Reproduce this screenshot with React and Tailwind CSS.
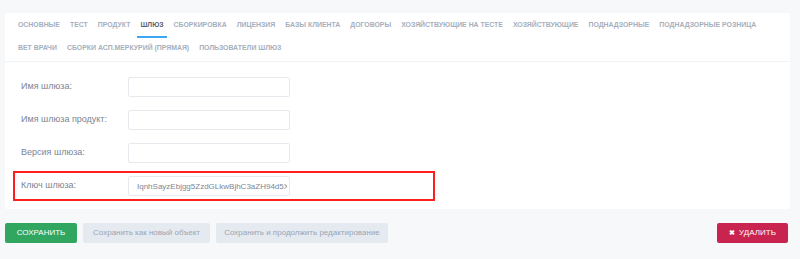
import React from "react";

const row1 = [
  "ОСНОВНЫЕ",
  "ТЕСТ",
  "ПРОДУКТ",
  "ШЛЮЗ",
  "СБОРКИРОВКА",
  "ЛИЦЕНЗИЯ",
  "БАЗЫ КЛИЕНТА",
  "ДОГОВОРЫ",
  "ХОЗЯЙСТВУЮЩИЕ НА ТЕСТЕ",
  "ХОЗЯЙСТВУЮЩИЕ",
  "ПОДНАДЗОРНЫЕ",
  "ПОДНАДЗОРНЫЕ РОЗНИЦА",
];
const row2 = ["ВЕТ ВРАЧИ", "СБОРКИ АСП.МЕРКУРИЙ (ПРЯМАЯ)", "ПОЛЬЗОВАТЕЛИ ШЛЮЗ"];

function Tab({ label }) {
  const active = label === "ШЛЮЗ";
  return (
    <div
      className={
        "px-[3px] pb-[5px] h-[19px] text-[6.9px] leading-[12px] font-bold whitespace-nowrap border-b-2 " +
        (active ? "border-[#3aa8f2] text-[#5b6372]" : "border-transparent text-[#a7afbc]")
      }
    >
      {label}
    </div>
  );
}

function Row({ label, value, highlight }) {
  return (
    <div
      className={
        "w-[422px] h-[30px] border-2 pl-[6px] py-[3px] flex items-center " +
        (highlight ? "border-[#ff1f1f]" : "border-transparent")
      }
    >
      <div className="w-[107px] text-[9px] text-[#7c8492]">{label}</div>
      <input
        readOnly
        value={value || ""}
        className="w-[162px] h-[20px] bg-white border border-[#e6e9ee] rounded-[2px] pl-[8px] pr-[2px] text-[8px] text-[#7d8696] outline-none"
        style={{ fontFamily: '"Liberation Sans", Arial, sans-serif' }}
      />
    </div>
  );
}

export default function App() {
  return (
    <div
      className="w-[800px] h-[259px] bg-[#f7f8fa] pt-[13px] pl-[5px] overflow-hidden"
      style={{ fontFamily: '"Liberation Sans", Arial, sans-serif' }}
    >
      <div className="w-[785px] bg-white rounded-[2px]">
        <div className="pl-[10px] pt-[6px] border-b border-[#f1f3f6] flex flex-col gap-[4px]">
          <div className="flex gap-x-[4px]">
            {row1.map((t) => (
              <Tab key={t} label={t} />
            ))}
          </div>
          <div className="flex gap-x-[4px]">
            {row2.map((t) => (
              <Tab key={t} label={t} />
            ))}
          </div>
        </div>
        <div className="pl-[8px] pt-[10px] pb-[8px] flex flex-col gap-[3px]">
          <Row label="Имя шлюза:" />
          <Row label="Имя шлюза продукт:" />
          <Row label="Версия шлюза:" />
          <Row label="Ключ шлюза:" value="IqnhSayzEbjgg5ZzdGLkwBjhC3aZH94d5Xk2" highlight />
        </div>
      </div>
      <div className="mt-[14px] w-[783px] flex items-center gap-[6px]">
        <button className="w-[72px] h-[20px] bg-[#30a660] rounded-[2px] text-white text-[8px] uppercase">
          Сохранить
        </button>
        <button className="w-[127px] h-[20px] bg-[#e5eaf1] rounded-[2px] text-[#9ba4b1] text-[8px]">
          Сохранить как новый объект
        </button>
        <button className="w-[172px] h-[20px] bg-[#e5eaf1] rounded-[2px] text-[#9ba4b1] text-[8px]">
          Сохранить и продолжить редактирование
        </button>
        <button className="ml-auto w-[71px] h-[20px] bg-[#c9244f] rounded-[2px] text-white text-[8px] flex items-center justify-center gap-[4px]">
          <span className="text-[7px] font-bold">✖</span>
          <span>УДАЛИТЬ</span>
        </button>
      </div>
    </div>
  );
}
